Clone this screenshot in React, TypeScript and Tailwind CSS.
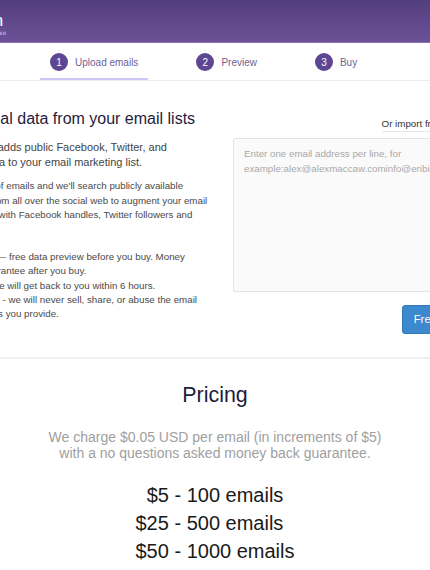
import React from "react";

const steps = [
  { n: 1, label: "Upload emails", active: true },
  { n: 2, label: "Preview", active: false },
  { n: 3, label: "Buy", active: false },
];

const prices = ["$5 - 100 emails", "$25 - 500 emails\u00a0\u00a0", "$50 - 1000 emails", "$100 - 2000 emails"];

export default function App() {
  return (
    <div className="min-h-[570px] overflow-hidden bg-white font-['Liberation_Sans',Arial,sans-serif]">
      {/* header bar */}
      <header className="flex h-[43px] justify-center border-b border-[#8b75b6] bg-gradient-to-b from-[#523d7e] to-[#6b5297]">
        <div className="w-[552px] shrink-0 pt-[11.5px]">
          <div className="text-[17px] leading-[17px] text-white">Datagon</div>
          <div className="mt-[1.5px] text-[6px] leading-[6px] tracking-[0.5px] text-[#e4dcf2]">the social data toolkit</div>
        </div>
      </header>

      {/* steps */}
      <nav className="flex justify-center border-b border-[#ededed]">
        <div className="flex w-[552px] shrink-0 gap-[38px] pl-[101px]">
          {steps.map((s) => (
            <div
              key={s.n}
              className={`flex h-[37px] items-center gap-[7px] px-[10px] pt-[3px] ${
                s.active ? "border-b-2 border-[#cec6f4]" : "border-b-2 border-transparent"
              }`}
            >
              <span className="flex h-[18px] w-[18px] items-center justify-center rounded-full bg-[#5e4792] text-[10px] text-white">
                {s.n}
              </span>
              <span className="text-[10px] text-[#6e6296]">{s.label}</span>
            </div>
          ))}
        </div>
      </nav>

      {/* upload section */}
      <section className="flex justify-center border-b-2 border-[#efefef] pb-[23px] pt-[27.5px]">
        <div className="flex w-[552px] shrink-0 gap-[18px]">
          <div className="w-[276px] shrink-0 text-[#4a4a4a]">
            <h1 className="whitespace-nowrap text-[16px] leading-[20px] text-[#1f1c3c]">
              Add social data from your email lists
            </h1>
            <p className="mt-[11.7px] whitespace-nowrap text-[11px] leading-[15px] text-[#444]">
              Enrichment adds public Facebook, Twitter, and
              <br />
              LinkedIn data to your email marketing list.
            </p>
            <p className="mt-[9.3px] whitespace-nowrap text-[9.75px] leading-[14.28px]">
              Upload a list of emails and we'll search publicly available
              <br />
              information from all over the social web to augment your email
              <br />
              list, complete with Facebook handles, Twitter followers and
              <br />
              Klout scores.
            </p>
            <ul className="mt-[13.6px] whitespace-nowrap pl-[19px] text-[9.75px] leading-[14.28px]">
              <li>
                Low risk — free data preview before you buy. Money
                <br />
                back guarantee after you buy.
              </li>
              <li>Fast — we will get back to you within 6 hours.</li>
              <li>
                Protected - we will never sell, share, or abuse the email
                <br />
                addresses you provide.
              </li>
            </ul>
          </div>

          <div className="flex flex-1 flex-col pt-[8.5px]">
            <div className="text-right text-[9.75px] leading-[14.28px]">
              <span className="inline-block border-b border-[#e6e6e6] text-[#333]">Or import from Mailchimp</span>
            </div>
            <textarea
              className="mt-[6px] block h-[153.5px] w-full resize-none rounded-[2px] border border-[#e4e4e4] bg-[#fafafa] px-[10px] pt-[8px] text-[9.75px] leading-[14.28px] text-[#333] outline-none placeholder:text-[#a9a9a9]"
              placeholder="Enter one email address per line, for example:alex@alexmaccaw.cominfo@eribium.org"
            />
            <div className="mt-[13.5px] flex justify-end">
              <button className="h-[29px] rounded-[3px] border border-[#3479bb] bg-[#3c89cd] px-[10.5px] text-[11.4px] text-white">
                Free preview
              </button>
            </div>
          </div>
        </div>
      </section>

      {/* pricing */}
      <section className="pt-[24px] text-center">
        <h2 className="text-[21.4px] leading-[25.7px] text-[#1f1c3c]">Pricing</h2>
        <p className="mt-[20.4px] text-[14px] leading-[16px] text-[#a0a0a0]">
          We charge $0.05 USD per email (in increments of $5)
          <br />
          with a no questions asked money back guarantee.
        </p>
        <div className="mt-[19.9px] text-[20px] leading-[28px] text-[#1a1a1a]">
          {prices.map((p) => (
            <div key={p} className="whitespace-pre">
              {p}
            </div>
          ))}
        </div>
      </section>
    </div>
  );
}
